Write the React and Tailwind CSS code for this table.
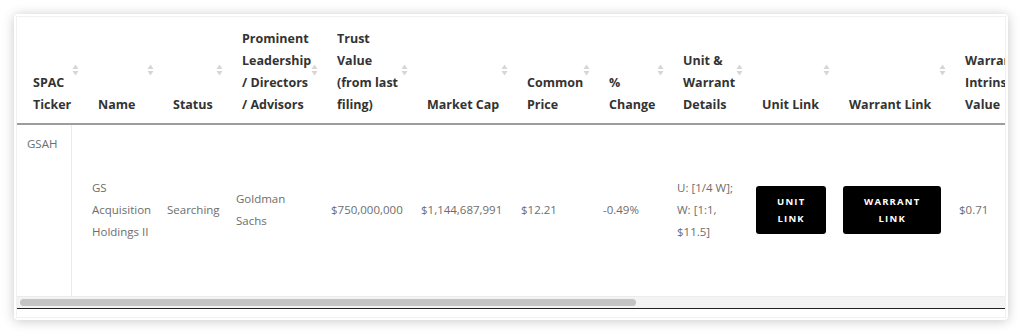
import React from "react";

const cols = [65, 75, 69, 95, 90, 100, 82, 74, 79, 87, 116, 100];

const headers = [
  ["SPAC", "Ticker"],
  ["Name"],
  ["Status"],
  ["Prominent", "Leadership", "/ Directors", "/ Advisors"],
  ["Trust", "Value", "(from last", "filing)"],
  ["Market Cap"],
  ["Common", "Price"],
  ["%", "Change"],
  ["Unit &", "Warrant", "Details"],
  ["Unit Link"],
  ["Warrant Link"],
  ["Warrant", "Intrinsic", "Value"],
];

function SortIcon() {
  return (
    <svg width="7" height="12" viewBox="0 0 7 12" className="block">
      <path d="M3.5 0.5 L6.5 5 L0.5 5 Z" fill="#d6d6d6" />
      <path d="M3.5 11.5 L6.5 7 L0.5 7 Z" fill="#d6d6d6" />
    </svg>
  );
}

function Lines({ lines }) {
  return lines.map((l, i) => (
    <React.Fragment key={i}>
      {l}
      {i < lines.length - 1 && <br />}
    </React.Fragment>
  ));
}

function LinkButton({ lines }) {
  return (
    <div className="inline-flex h-[48px] items-center justify-center rounded-[3px] bg-black px-[21px] text-center text-[9.5px] font-bold uppercase leading-[17px] tracking-[1.2px] text-white">
      <span>
        <Lines lines={lines} />
      </span>
    </div>
  );
}

export default function App() {
  const td = "align-middle pl-[10px] pr-[4px] whitespace-nowrap";
  return (
    <div
      className="bg-white pl-[14px] pt-[14px] pb-[15px]"
      style={{ fontFamily: '"Open Sans", "Liberation Sans", sans-serif' }}
    >
      <div className="h-[306px] w-[994px] rounded-[4px] bg-white p-[2px] shadow-[0_1px_12px_rgba(0,0,0,0.22)]">
        <div className="flex h-full flex-col border border-[#f1f1f1]">
          <div className="overflow-hidden">
            <table className="table-fixed border-collapse" style={{ width: 1032 }}>
              <colgroup>
                {cols.map((w, i) => (
                  <col key={i} style={{ width: w }} />
                ))}
              </colgroup>
              <thead>
                <tr className="border-b-2 border-[#9d9d9d]">
                  {headers.map((h, i) => (
                    <th
                      key={i}
                      className="relative h-[106px] whitespace-nowrap pb-[7px] pl-[16px] pr-[8px] pt-[11px] text-left align-bottom text-[12.5px] font-bold leading-[22px] text-[#333]"
                    >
                      <Lines lines={h} />
                      <span className="absolute right-[3px] top-[47px]">
                        <SortIcon />
                      </span>
                    </th>
                  ))}
                </tr>
              </thead>
              <tbody className="text-[11.5px] leading-[22px] text-[#6d6d6d]">
                <tr className="h-[172px] border-b border-[#ececec]">
                  <td className="whitespace-nowrap bg-[linear-gradient(to_right,transparent_54px,#ebebeb_54px,#ebebeb_55px,transparent_55px)] pl-[10px] pt-[8px] align-top">
                    GSAH
                  </td>
                  <td className={td}>
                    <Lines lines={["GS", "Acquisition", "Holdings II"]} />
                  </td>
                  <td className={td}>Searching</td>
                  <td className={td}>
                    <Lines lines={["Goldman", "Sachs"]} />
                  </td>
                  <td className={td}>$750,000,000</td>
                  <td className={td}>$1,144,687,991</td>
                  <td className={td}>$12.21</td>
                  <td className={td}>-0.49%</td>
                  <td className={td}>
                    <Lines lines={["U: [1/4 W];", "W: [1:1,", "$11.5]"]} />
                  </td>
                  <td className={td}>
                    <LinkButton lines={["Unit", "Link"]} />
                  </td>
                  <td className={td}>
                    <LinkButton lines={["Warrant", "Link"]} />
                  </td>
                  <td className={td}>$0.71</td>
                </tr>
              </tbody>
            </table>
          </div>
          <div className="flex h-[11px] items-center bg-[#f3f3f3] pl-[3px]">
            <div className="h-[7px] w-[616px] rounded-full bg-[#c3c3c3]" />
          </div>
          <div className="h-px bg-[#222]" />
        </div>
      </div>
    </div>
  );
}
